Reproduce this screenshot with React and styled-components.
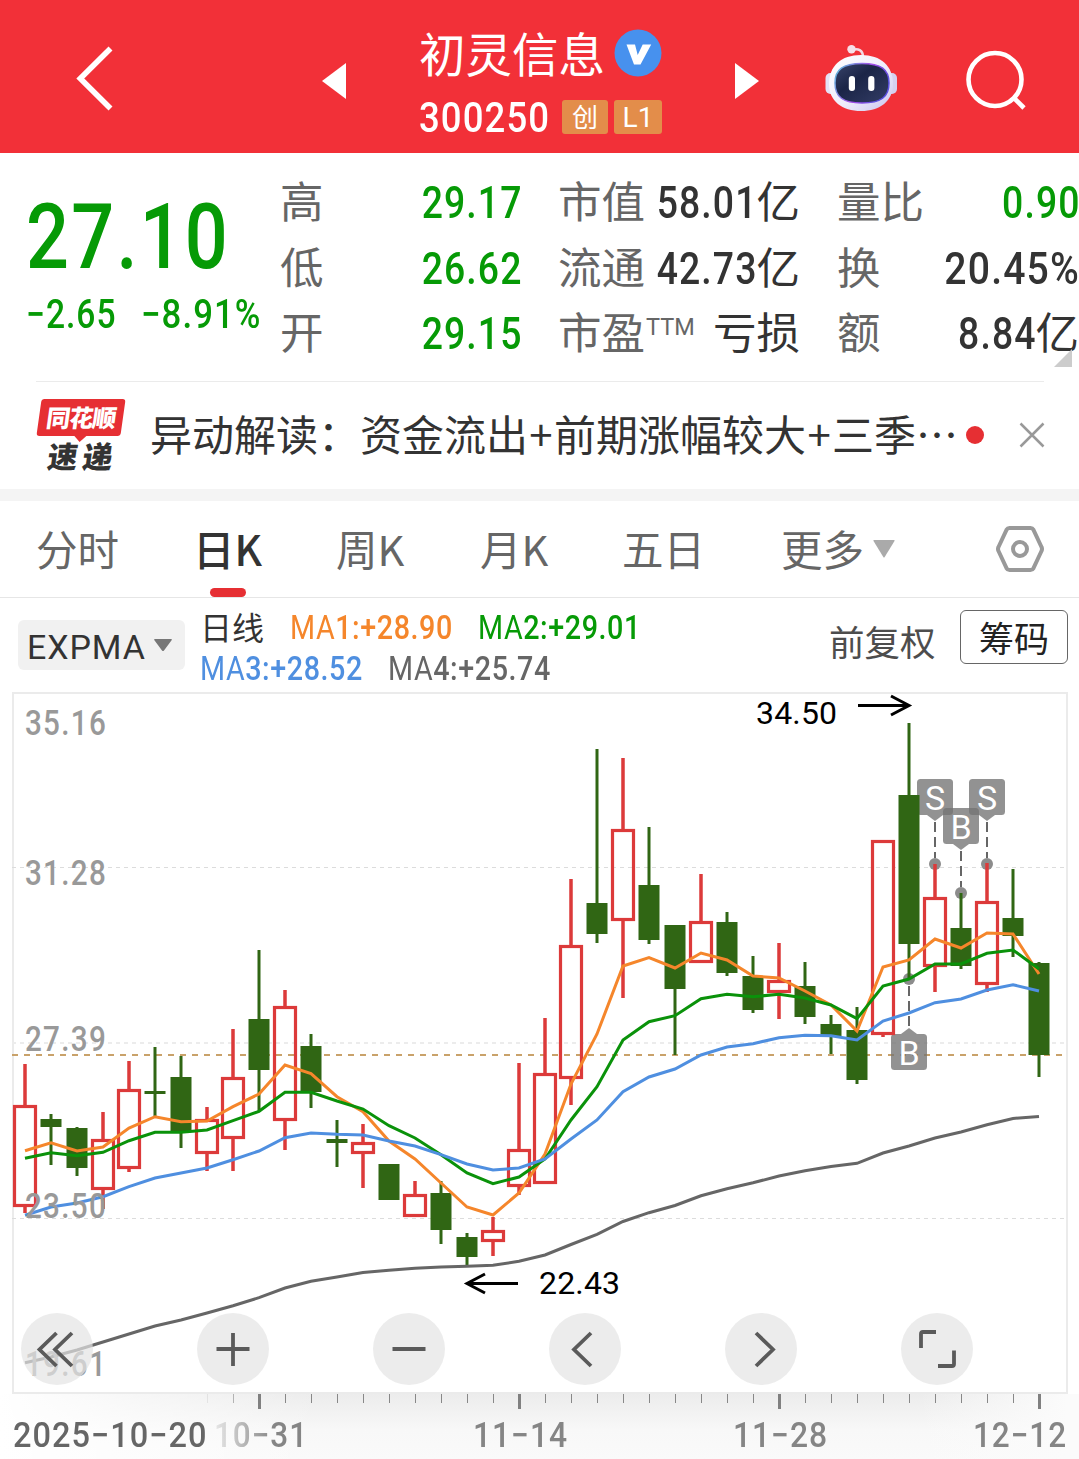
import React from 'react'
import styled, { createGlobalStyle } from 'styled-components'

const GlobalStyle = createGlobalStyle`
  * {
    box-sizing:     border-box;
  }
  body {
    margin:         0;
    background:     #fff;
    font-family:    "Noto Sans CJK SC", sans-serif;
    color:          #333;
  }
  svg {
    display:        block;
    flex:           none;
  }
`

const GREEN = '#069a06'

/* ---------- data ---------- */

const quotes = [
  [{ label: '高', num: '29.17', green: true }, { label: '市值', num: '58.01', unit: '亿' }, { label: '量比', num: '0.90', green: true }],
  [{ label: '低', num: '26.62', green: true }, { label: '流通', num: '42.73', unit: '亿' }, { label: '换', num: '20.45%', scale: 0.87 }],
  [{ label: '开', num: '29.15', green: true }, { label: '市盈', sup: 'TTM', unit: '亏损' }, { label: '额', num: '8.84', unit: '亿' }],
]

const tabs = ['分时', '日K', '周K', '月K', '五日']

// [up, high, body top, body bottom, low]
const candles = [
  [1, 1064, 1105, 1207, 1213], [0, 1114, 1119, 1127, 1165], [0, 1127, 1128, 1168, 1176],
  [1, 1112, 1139, 1190, 1209], [1, 1061, 1089, 1169, 1172], [0, 1047, 1091, 1094, 1117],
  [0, 1056, 1077, 1132, 1148], [1, 1107, 1119, 1154, 1171], [1, 1029, 1077, 1139, 1171],
  [0, 950, 1019, 1070, 1111], [1, 990, 1006, 1121, 1150], [0, 1034, 1046, 1092, 1108],
  [0, 1120, 1139, 1143, 1167], [1, 1124, 1142, 1154, 1188], [0, 1164, 1164, 1200, 1200],
  [1, 1181, 1194, 1217, 1217], [0, 1181, 1193, 1230, 1244], [0, 1233, 1237, 1257, 1265],
  [1, 1217, 1230, 1242, 1256], [1, 1063, 1149, 1187, 1195], [1, 1018, 1073, 1184, 1184],
  [1, 879, 945, 1079, 1105], [0, 749, 903, 934, 943], [1, 758, 829, 921, 998],
  [0, 827, 885, 940, 944], [0, 925, 925, 989, 1055], [1, 874, 921, 963, 963],
  [0, 912, 922, 973, 976], [0, 956, 976, 1010, 1013], [1, 943, 980, 993, 1019],
  [0, 962, 986, 1017, 1024], [0, 1015, 1024, 1036, 1054], [0, 1007, 1030, 1080, 1084],
  [1, 840, 840, 1035, 1037], [0, 723, 795, 944, 979], [1, 864, 897, 967, 992],
  [0, 893, 928, 966, 969], [1, 863, 901, 985, 992], [0, 869, 918, 936, 957],
  [0, 962, 963, 1055, 1077],
]

const averages = [
  { color: '#666666', points: [1362.7, 1357, 1350, 1342, 1334, 1326, 1320, 1313, 1305.7, 1297.7, 1288, 1281.3, 1277, 1272.5, 1270.3, 1268.3, 1267, 1266.3, 1265.3, 1261.3, 1255, 1244.5, 1234.3, 1221.5, 1212.7, 1205.5, 1195.8, 1188.8, 1182.8, 1176, 1170.8, 1166.5, 1163.3, 1153, 1146, 1138, 1132, 1124.8, 1118.5, 1116.4] },
  { color: '#f5862b', points: [1150.7, 1142.7, 1151, 1147, 1128, 1116.7, 1121.7, 1121, 1106.7, 1094, 1065, 1073.7, 1096.7, 1111.7, 1141, 1159, 1183, 1207, 1215, 1193, 1154, 1084, 1034, 966, 957.5, 968, 953, 960, 976, 978, 991, 1005, 1031, 967, 960, 939, 948, 933, 934, 974] },
  { color: '#0a920a', points: [1158.3, 1152.7, 1155.7, 1152.3, 1140.7, 1132.3, 1132.3, 1130, 1120.7, 1111.3, 1092.3, 1092.3, 1101, 1109, 1125.7, 1138, 1154.7, 1173, 1183.7, 1177, 1159, 1120, 1086.7, 1040, 1021.7, 1015.7, 998.7, 994.3, 996.7, 994.3, 998, 1005, 1018.7, 986, 979, 964, 964, 953.3, 950, 969] },
  { color: '#4f8fe0', points: [1215.3, 1207, 1203, 1196.7, 1186.7, 1178, 1173, 1168, 1159.7, 1151, 1137.7, 1133, 1134.3, 1135, 1141, 1146, 1154.7, 1164, 1170, 1168, 1159, 1139, 1120, 1091.7, 1077, 1069, 1055, 1047, 1043.7, 1037.7, 1035.3, 1035.7, 1040, 1021, 1013, 1002.7, 999, 990, 984.7, 991] },
]

const prices = [['35.16', 735], ['31.28', 885], ['27.39', 1051], ['23.50', 1218], ['19.61', 1376]]

const xAt = i => 25 + 26 * i

/* ---------- header ---------- */

const Header = () => (
  <HeaderBar>
    <svg width="38" height="68" viewBox="76 44 38 68" fill="none" stroke="#fff" strokeWidth="5.600">
      <path d="M110.500 48.500 80.300 78.500 110.500 108.500" />
    </svg>
    <Arrow $left="208px" width="24" height="38" viewBox="0 0 24 38"><path d="M24 1v36L0 19z" /></Arrow>
    <TitleBlock>
      <NameRow>
        初灵信息
        <svg width="48" height="48" viewBox="0 0 48 48">
          <circle cx="24" cy="24" r="23.5" fill="#4791ee" />
          <path d="M12.500 15.500h8.500l2.700 10.500 5-10.500h8.500L26.500 35.500h-6.500z" fill="#fff" />
        </svg>
      </NameRow>
      <CodeRow>
        <Code><Num $size={42} $scale={0.87}>300250</Num></Code>
        <Badge $width={46}>创</Badge>
        <Badge $width={48}><BadgeLevel>L1</BadgeLevel></Badge>
      </CodeRow>
    </TitleBlock>
    <Arrow $left="73px" width="24" height="38" viewBox="0 0 24 38"><path d="M0 1v36l24-18z" /></Arrow>
    <Robot />
    <SearchIcon width="64" height="64" viewBox="964 48 64 64">
      <circle cx="995" cy="79.500" r="26.500" />
      <path d="M1014 98l10 10" />
    </SearchIcon>
  </HeaderBar>
)

const Robot = () => (
  <RobotIcon width="74" height="68" viewBox="824 44 74 68">
    <defs>
      <linearGradient id="shell" x1="0" y1="0" x2="1" y2="1">
        <stop offset="0" stopColor="#ffffff" />
        <stop offset="0.55" stopColor="#efedfb" />
        <stop offset="1" stopColor="#c9c4ee" />
      </linearGradient>
      <linearGradient id="rim" x1="0" y1="0" x2="1" y2="0.4">
        <stop offset="0" stopColor="#58c4d8" />
        <stop offset="0.6" stopColor="#a44be8" />
        <stop offset="1" stopColor="#5a50e0" />
      </linearGradient>
      <linearGradient id="visor" x1="0" y1="0" x2="1" y2="1">
        <stop offset="0" stopColor="#39446b" />
        <stop offset="0.4" stopColor="#1b2547" />
        <stop offset="1" stopColor="#333d66" />
      </linearGradient>
    </defs>
    <path d="M852 50c6-2 11 0 11 7" fill="none" stroke="#f3d9e4" strokeWidth="2.500" />
    <circle cx="851.500" cy="49.300" r="4.200" fill="#f6dfe8" />
    <rect x="825.500" y="73" width="12" height="21" rx="5" fill="#e4e1f6" />
    <rect x="885" y="73" width="12" height="21" rx="5" fill="#d5d0f0" />
    <path d="M861 55c20 0 32 11 32 29 0 17-13 27-32 27s-32-10-32-27c0-18 12-29 32-29z" fill="url(#shell)" />
    <path d="M862 63.500c19 0 27 6 27 19.500 0 14-8 20-27 20s-27-6-27-20c0-13.500 8-19.500 27-19.500z" fill="url(#visor)" stroke="url(#rim)" strokeWidth="1.500" />
    <rect x="848.800" y="76" width="6.200" height="15" rx="3" fill="#fff" />
    <rect x="868.200" y="76" width="6.200" height="15" rx="3" fill="#fff" />
  </RobotIcon>
)

/* ---------- quote ---------- */

const Quote = () => (
  <QuotePanel>
    <PriceBlock>
      <Num $size={91}>27.10</Num>
      <ChangeRow>
        <ChangeCell><Num $size={40} $scale={0.84}>−2.65</Num></ChangeCell>
        <Num $size={40} $scale={0.87}>−8.91%</Num>
      </ChangeRow>
    </PriceBlock>
    <QuoteGrid>
      {quotes.flat().map(q => (
        <QuoteCell key={q.label}>
          <QuoteLabel>{q.label}{q.sup && <Sup>{q.sup}</Sup>}</QuoteLabel>
          <QuoteValue $green={q.green}>
            {q.num && <Num $size={45} $scale={q.scale} $right>{q.num}</Num>}
            {q.unit && <Unit>{q.unit}</Unit>}
          </QuoteValue>
        </QuoteCell>
      ))}
    </QuoteGrid>
    <Corner />
  </QuotePanel>
)

/* ---------- news ---------- */

const News = () => (
  <NewsBar>
    <NewsLogo>
      <LogoTop><span>同花顺</span></LogoTop>
      <LogoBottom>速递</LogoBottom>
    </NewsLogo>
    <NewsText>异动解读：资金流出<Plus>+</Plus>前期涨幅较大<Plus>+</Plus>三季<Dots>⋯</Dots></NewsText>
    <RedDot />
    <svg width="26" height="26" viewBox="0 0 26 26" stroke="#999" strokeWidth="2.500">
      <path d="M1.500 1.500l23 23M24.500 1.500l-23 23" />
    </svg>
  </NewsBar>
)

/* ---------- tabs ---------- */

const Tabs = () => (
  <TabBar>
    {tabs.map(tab => (
      <Tab key={tab} $active={tab === '日K'}>{tab}</Tab>
    ))}
    <Tab>
      更多
      <svg width="24" height="20" viewBox="0 0 24 20"><path d="M2 1h20q1 0 .5 1L12.700 18q-.7 1-1.400 0L1.500 2Q1 1 2 1z" fill="#aaa" /></svg>
    </Tab>
    <svg width="50" height="50" viewBox="0 0 50 50" fill="none" stroke="#999" strokeWidth="4">
      <path d="M14.500 4h21q2 0 3 1.800L46.500 23q1 2 0 4L38.500 44.200q-1 1.800-3 1.800h-21q-2 0-3-1.800L3.500 27q-1-2 0-4L11.500 5.800q1-1.800 3-1.800z" />
      <circle cx="25" cy="25" r="7" />
    </svg>
  </TabBar>
)

/* ---------- indicator ---------- */

const Average = ({ name, value, color, width }) => (
  <AverageCell $color={color} $width={width}>
    <Num $size={33} $scale={0.87} $gap={0.02}><Thin>MA</Thin>{name}:+{value}</Num>
  </AverageCell>
)

const Indicator = () => (
  <IndicatorBar>
    <Picker>
      EXPMA
      <svg width="20" height="14" viewBox="0 0 20 14"><path d="M2 1h16q1.500 0 .6 1.200L11 12.500q-1 1-2 0L1.400 2.200Q.5 1 2 1z" fill="#777" /></svg>
    </Picker>
    <Averages>
      <AverageRow>
        <Period>日线</Period>
        <Average name="1" value="28.90" color="#f5862b" width={188} />
        <Average name="2" value="29.01" color={GREEN} width={162} />
      </AverageRow>
      <AverageRow>
        <Average name="3" value="28.52" color="#4f8fe0" width={188} />
        <Average name="4" value="25.74" color="#666" width={162} />
      </AverageRow>
    </Averages>
    <Adjust>前复权</Adjust>
    <ChipButton>筹码</ChipButton>
  </IndicatorBar>
)

/* ---------- chart ---------- */

const Candle = ({ x, data }) => {
  const [up, high, top, bottom, low] = data
  if (up) {
    return (
      <g stroke="#dc3a3a" fill="none">
        <path d={`M${x} ${high}V${top}M${x} ${bottom}V${low}`} strokeWidth="3.500" />
        <rect x={x - 10.5} y={top + 1.5} width="21" height={bottom - top - 3} strokeWidth="3.200" />
      </g>
    )
  }
  return (
    <g fill="#306614">
      <rect x={x - 1.5} y={high} width="3" height={low - high} />
      <rect x={x - 10.5} y={top} width="21" height={bottom - top} />
    </g>
  )
}

// down: the tag hangs under the bar and its pointer faces up
const Marker = ({ x, y, dot, letter, down }) => (
  <g>
    <path d={down ? `M${x} ${dot + 7}V${y - 6}` : `M${x} ${y + 43}V${dot - 6}`} stroke="#666" strokeWidth="2" strokeDasharray="10 5" />
    <circle cx={x} cy={dot} r="6" fill="#8c8c8c" />
    <g fill="#737373" fillOpacity="0.78">
      <rect x={x - 18} y={y} width="36" height="36" rx="3.500" />
      <path d={down ? `M${x - 8} ${y}l8-6 8 6z` : `M${x - 8} ${y + 36}l8 6 8-6z`} />
    </g>
    <MarkerText x={x} y={y + 30.5}>{letter}</MarkerText>
  </g>
)

const Chart = () => (
  <ChartPanel>
    <svg width="1079" height="702" viewBox="0 692 1079 702">
      <rect x="13" y="693" width="1054" height="700" fill="none" stroke="#ebebeb" strokeWidth="2" />
      <g stroke="#dcdcdc" strokeWidth="1" strokeDasharray="4 4">
        <path d="M12 867.500H1067M12 1218.500H1067" />
        <path d="M12 1043H1067" stroke="#ececec" strokeWidth="2" />
      </g>
      <path d="M12 1055H1067" stroke="#c9a26a" strokeWidth="2" strokeDasharray="6 6" />
      <Marker x={935} y={779} dot={864} letter="S" />
      <Marker x={987} y={779} dot={864} letter="S" />
      <Marker x={961} y={808} dot={893} letter="B" />
      <Marker x={909} y={1034} dot={979} letter="B" down />
      {candles.map((data, i) => <Candle key={i} x={xAt(i)} data={data} />)}
      {averages.map(({ color, points }) => (
        <polyline key={color} fill="none" stroke={color} strokeWidth="3" points={points.map((y, i) => `${xAt(i)},${y}`).join(' ')} />
      ))}
      {prices.map(([text, y]) => (
        <PriceText key={text} x="25" y={y} textLength="82" lengthAdjust="spacingAndGlyphs">{text}</PriceText>
      ))}
      <g fill="none" stroke="#000" strokeWidth="3">
        <path d="M858 705.500H908M891 696l18 9.500-18 9.500" />
        <path d="M518 1283.500H468M485 1274l-18 9.500 18 9.500" />
      </g>
      <ExtremeText x="756" y="724" textLength="81">34.50</ExtremeText>
      <ExtremeText x="539" y="1294" textLength="81">22.43</ExtremeText>
    </svg>
    <Controls>
      <Control><path d="M35.500 20 18.500 36.500 35.500 53M51 20 34 36.500 51 53" /></Control>
      <Control><path d="M36 20v33M19.500 36h33" /></Control>
      <Control><path d="M19.500 36h33" /></Control>
      <Control><path d="M42 20 25 36.500 42 53" /></Control>
      <Control><path d="M31 20 48 36.500 31 53" /></Control>
      <Control><path d="M20 35V21q0-2 2-2h13M37 53h14q2 0 2-2V37.500" /></Control>
    </Controls>
  </ChartPanel>
)

const Control = ({ children }) => (
  <ControlButton>
    <svg width="72" height="72" viewBox="0 0 72 72" fill="none" stroke="#5a5a5a" strokeWidth="3.800">{children}</svg>
  </ControlButton>
)

const DateAxis = () => (
  <AxisPanel>
    <svg width="1079" height="18" viewBox="0 0 1079 18">
      {Array.from({ length: 33 }, (_, i) => i + 7).map(i => (
        (i - 9) % 10 === 0
          ? <rect key={i} x={xAt(i) - 1} y="0" width="3" height="15" fill="#808080" />
          : <rect key={i} x={xAt(i)} y="0" width="1" height="9" fill="#888" opacity={i === 7 ? 0.15 : i === 8 ? 0.6 : 1} />
      ))}
    </svg>
    <Dates>
      <DateCell $width={201} $dark><Num $size={35} $scale={0.93}>2025−10−20</Num></DateCell>
      <DateCell $width={259} $fade><Num $size={35} $scale={0.9}>10−31</Num></DateCell>
      <DateCell $width={260}><Num $size={35} $scale={0.91}>11−14</Num></DateCell>
      <DateCell $width={240}><Num $size={35} $scale={0.91}>11−28</Num></DateCell>
      <DateCell $width={94}><Num $size={35} $scale={0.9}>12−12</Num></DateCell>
    </Dates>
  </AxisPanel>
)

const App = () => {
  return (
    <Screen>
      <GlobalStyle />
      <Header />
      <Quote />
      <News />
      <Tabs />
      <Indicator />
      <Chart />
      <DateAxis />
    </Screen>
  )
}

/* ---------- styles ---------- */

const Screen = styled.div`
  width:            1079px;
  height:           1459px;
  overflow:         hidden;
`

// narrow figures, squeezed from one side
const Num = styled.span`
  display:          inline-block;
  margin-right:     ${p => p.$right ? '-0.03em' : 0};
  font-family:      Roboto, sans-serif;
  font-weight:      500;
  font-size:        ${p => p.$size}px;
  line-height:      1;
  letter-spacing:   ${p => p.$gap ?? 0.03}em;
  white-space:      nowrap;
  transform:        scaleX(${p => p.$scale || 0.83});
  transform-origin: ${p => p.$right ? 'right' : 'left'};
`

const Thin = styled.span`
  font-weight:      400;
`

const HeaderBar = styled.header`
  display:          flex;
  height:           153px;
  padding-left:     76px;
  background:       #f23038;

  > svg:first-child {
    margin-top:     44px;
  }
`

const Arrow = styled.svg`
  margin:           62px 0 0 ${p => p.$left};
  fill:             #fff;
`

const TitleBlock = styled.div`
  width:            243px;
  margin-left:      73px;
`

const NameRow = styled.div`
  display:          flex;
  align-items:      center;
  gap:              9px;
  height:           52px;
  margin-top:       25px;
  color:            #fff;
  font-size:        46.5px;
  white-space:      nowrap;

  svg {
    margin-top:     3px;
  }
`

const CodeRow = styled.div`
  display:          flex;
  align-items:      center;
  gap:              6px;
  height:           36px;
  margin-top:       22px;
  color:            #fff;
`

const Code = styled.div`
  width:            137px;
  height:           40px;
`

const Badge = styled.span`
  width:            ${p => p.$width}px;
  height:           34px;
  border-radius:    3px;
  background:       #e38d4a;
  font-size:        26px;
  line-height:      32px;
  text-align:       center;
`

const BadgeLevel = styled.span`
  font-family:      Roboto, sans-serif;
  font-size:        28px;
  line-height:      35px;
`

const RobotIcon = styled.svg`
  margin:           44px 0 0 65px;
`

const SearchIcon = styled.svg`
  margin:           48px 0 0 66px;
  fill:             none;
  stroke:           #fff;
  stroke-width:     4.6px;
`

const QuotePanel = styled.section`
  position:         relative;
  display:          flex;
  height:           228px;
`

const PriceBlock = styled.div`
  width:            280px;
  padding:          39px 0 0 26px;
  color:            ${GREEN};
`

const ChangeRow = styled.div`
  display:          flex;
  margin-top:       12px;
`

const ChangeCell = styled.div`
  width:            115px;
`

const QuoteGrid = styled.div`
  display:               grid;
  grid-template-columns: 241px 242px 242px;
  grid-auto-rows:        65.5px;
  column-gap:            37px;
  padding-top:           17px;
`

const QuoteCell = styled.div`
  display:          flex;
  justify-content:  space-between;
  align-items:      center;
  height:           65px;
  font-size:        43.5px;
  line-height:      59px;
  white-space:      nowrap;
`

const QuoteLabel = styled.span`
  flex:             none;
  height:           65px;
  color:            #666;
`

const Unit = styled.span`
  height:           65px;
`

const Sup = styled.span`
  margin-left:      1px;
  font-family:      Roboto, sans-serif;
  font-size:        23.5px;
  vertical-align:   14px;
  line-height:      1;
`

const QuoteValue = styled.span`
  display:          flex;
  flex:             1;
  justify-content:  flex-end;
  align-items:      center;
  min-width:        0;
  color:            ${p => p.$green ? GREEN : '#333'};
`

const Corner = styled.div`
  position:         absolute;
  right:            7px;
  bottom:           14px;
  border-left:      18px solid transparent;
  border-bottom:    18px solid #ccc;
`

const NewsBar = styled.section`
  position:         relative;
  display:          flex;
  align-items:      center;
  height:           120px;
  padding-left:     36px;
  border-bottom:    12px solid #f4f4f4;

  &::before {
    content:        "";
    position:       absolute;
    top:            0;
    left:           36px;
    width:          1008px;
    height:         1px;
    background:     #ebebeb;
  }
`

const NewsLogo = styled.div`
  width:            114px;
  height:           72px;
`

const LogoTop = styled.div`
  position:         relative;
  width:            84px;
  height:           37px;
  margin-left:      3px;
  border-radius:    3px;
  background:       #e62f33;
  color:            #fff;
  font-size:        24px;
  font-weight:      900;
  line-height:      36px;
  letter-spacing:   -1px;
  text-align:       center;
  transform:        skewX(-8deg);

  &::after {
    content:        "";
    position:       absolute;
    left:           38px;
    top:            37px;
    border:         6px solid transparent;
    border-top:     6px solid #e62f33;
    border-bottom:  0;
  }
`

const LogoBottom = styled.div`
  margin:           4px 0 0 12px;
  font-size:        30px;
  font-weight:      900;
  line-height:      30px;
  letter-spacing:   5px;
  transform:        skewX(-8deg);
`

const NewsText = styled.div`
  width:            815px;
  height:           66px;
  font-size:        42px;
  line-height:      62px;
  white-space:      nowrap;
`

const Plus = styled.span`
  display:          inline-block;
  width:            26px;
  text-align:       center;
`

const Dots = styled.span`
  display:          inline-block;
  width:            42px;
  text-align:       center;
`

const RedDot = styled.div`
  width:            18px;
  height:           18px;
  margin:           0 35px 0 1px;
  border-radius:    50%;
  background:       #e62f33;
`

const TabBar = styled.nav`
  display:               grid;
  grid-template-columns: 160px 140px 144px 142px 159px 214px 50px;
  align-items:           center;
  height:                97px;
  padding-left:          36px;
  border-bottom:         1px solid #e6e6e6;
`

const Tab = styled.div`
  position:         relative;
  display:          flex;
  align-items:      center;
  gap:              8px;
  justify-self:     start;
  height:           96px;
  margin-left:      ${p => p.$active ? '-3px' : '0'};
  padding-bottom:   3px;
  font-size:        41.5px;
  font-weight:      ${p => p.$active ? 500 : 400};
  color:            ${p => p.$active ? '#333' : '#666'};

  svg {
    margin-top:     2px;
  }
  &::after {
    content:        ${p => p.$active ? '""' : 'none'};
    position:       absolute;
    left:           17px;
    bottom:         0;
    width:          36px;
    height:         9px;
    border-radius:  4.5px;
    background:     #e62f33;
  }
`

const IndicatorBar = styled.section`
  display:          flex;
  height:           94px;
  padding-left:     18px;
`

const Picker = styled.div`
  display:          flex;
  align-items:      center;
  gap:              7px;
  width:            167px;
  height:           50px;
  margin-top:       22px;
  padding:          4px 0 0 9px;
  border-radius:    6px;
  background:       #f1f1f1;
  font-family:      Roboto, sans-serif;
  font-size:        34px;
  letter-spacing:   0.9px;

  svg {
    margin-top:     -5px;
  }
`

const Averages = styled.div`
  width:            644px;
  padding:          9px 0 0 15px;
`

const AverageRow = styled.div`
  display:          flex;
  align-items:      center;
  height:           41px;
`

const Period = styled.span`
  width:            90px;
  height:           41px;
  font-size:        32px;
  line-height:      38px;
`

const AverageCell = styled.span`
  width:            ${p => p.$width}px;
  height:           33px;
  color:            ${p => p.$color};
`

const Adjust = styled.div`
  width:            131px;
  margin-top:       21px;
  font-size:        35.5px;
  line-height:      44px;
  color:            #4d4d4d;
`

const ChipButton = styled.button`
  width:            108px;
  height:           54px;
  margin-top:       12px;
  padding:          0;
  border:           1px solid #666;
  border-radius:    6px;
  background:       #fff;
  color:            #222;
  font-family:      inherit;
  font-size:        35px;
  line-height:      50px;
`

const ChartPanel = styled.section`
  position:         relative;
  height:           702px;
`

const PriceText = styled.text`
  font-family:      Roboto, sans-serif;
  font-size:        35px;
  font-weight:      500;
  letter-spacing:   1.5px;
  fill:             #999;
`

const ExtremeText = styled.text`
  font-family:      Roboto, sans-serif;
  font-size:        32px;
  fill:             #000;
`

const MarkerText = styled.text`
  font-family:      Roboto, sans-serif;
  font-size:        34px;
  text-anchor:      middle;
  fill:             #fff;
`

const Controls = styled.div`
  position:         absolute;
  left:             21px;
  bottom:           9px;
  display:          flex;
  gap:              104px;
`

const ControlButton = styled.div`
  width:            72px;
  height:           72px;
  border-radius:    50%;
  background:       rgba(228, 228, 228, 0.7);
`

const AxisPanel = styled.section`
  height:           65px;
  background:
    linear-gradient(90deg, #fff, rgba(255, 255, 255, 0) 320px),
    linear-gradient(270deg, #fbfbfb 12px, rgba(251, 251, 251, 0) 160px),
    linear-gradient(#ececec, #f8f8f8 36px, #fafafa);
`

const Dates = styled.div`
  display:          flex;
  padding:          6px 0 0 13px;
`

const DateCell = styled.div`
  flex:             none;
  width:            ${p => p.$width}px;
  height:           36px;
  color:            ${p => p.$dark ? '#666' : '#858585'};
  mask-image:       ${p => p.$fade ? 'linear-gradient(90deg, rgba(0, 0, 0, 0.15), #000 60px)' : 'none'};
`

export default App
